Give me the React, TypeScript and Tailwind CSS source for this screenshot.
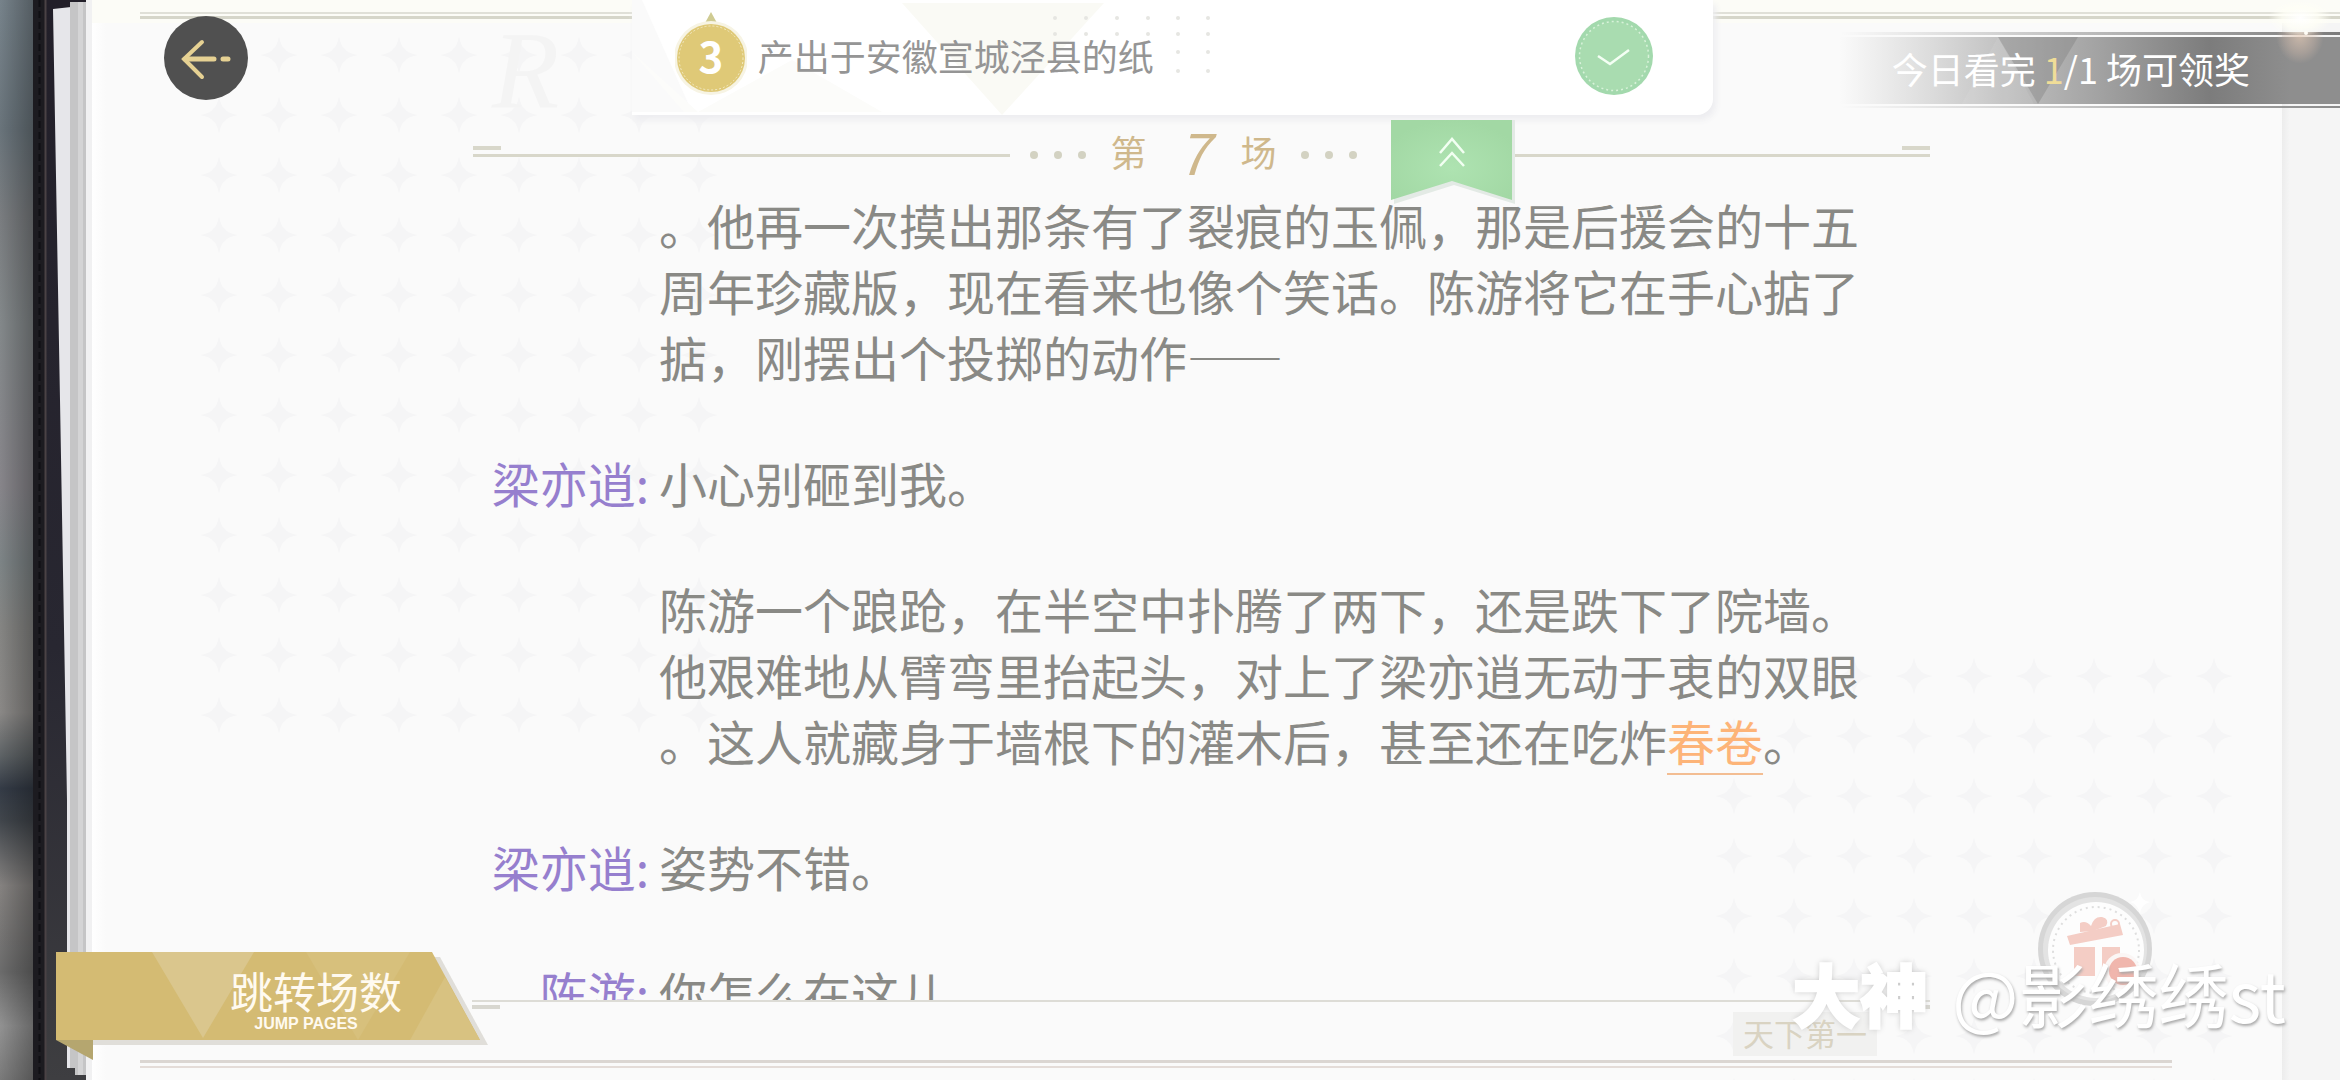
import type { ReactNode } from "react";

interface ScriptLine {
  speaker?: string;
  rows: ReactNode[];
}

const SCRIPT: ScriptLine[] = [
  {
    rows: [
      "。他再一次摸出那条有了裂痕的玉佩，那是后援会的十五",
      "周年珍藏版，现在看来也像个笑话。陈游将它在手心掂了",
      "掂，刚摆出个投掷的动作——",
    ],
  },
  { speaker: "梁亦逍", rows: ["小心别砸到我。"] },
  {
    rows: [
      "陈游一个踉跄，在半空中扑腾了两下，还是跌下了院墙。",
      "他艰难地从臂弯里抬起头，对上了梁亦逍无动于衷的双眼",
      <>
        。这人就藏身于墙根下的灌木后，甚至还在吃炸
        <a
          href="#clue"
          className="text-[#fdb478] underline decoration-[#f3bd92] decoration-2 underline-offset-[12px]"
        >
          春卷
        </a>
        。
      </>,
    ],
  },
  { speaker: "梁亦逍", rows: ["姿势不错。"] },
  { speaker: "陈游", rows: ["你怎么在这儿"] },
];

const CARD_DOTS = [
  [0, 0], [31, 0], [62, 0], [93, 0], [123, 0], [153, 0],
  [0, 16], [31, 16], [62, 16], [93, 16], [123, 16], [153, 16],
  [123, 34], [153, 34],
  [123, 53], [153, 53],
];

const BookEdge = () => (
  <div aria-hidden="true" className="relative w-[92px] shrink-0">
    <div className="absolute inset-y-0 left-0 w-[34px] bg-[linear-gradient(to_bottom,#77838b_0%,#69747b_12%,#7a7d80_20%,#83888a_30%,#87858a_45%,#7d8486_52%,#858583_58%,#8a8886_66%,#5d6265_70%,#343b46_73%,#41464c_76%,#858280_82%,#6b6b6b_90%,#929292_95%,#7a7a7a_100%)]" />
    <div className="absolute inset-y-0 left-0 w-[34px] bg-gradient-to-r from-transparent to-black/30" />
    <svg
      className="absolute inset-y-0 left-[33px] h-full w-[59px]"
      viewBox="0 0 59 1080"
      preserveAspectRatio="none"
    >
      <defs>
        <linearGradient id="cover" x1="0" y1="0" x2="0" y2="1">
          <stop offset="0" stopColor="#221f29" />
          <stop offset=".6" stopColor="#282731" />
          <stop offset="1" stopColor="#3e3e41" />
        </linearGradient>
      </defs>
      <rect width="59" height="1080" fill="url(#cover)" />
      <rect width="12" height="1080" fill="#1c1b20" />
      <path d="M6.500 0V1080" stroke="#0f0f13" strokeWidth="2" strokeDasharray="7 4" />
      <path d="M12.500 0V1080" stroke="#4a4245" strokeWidth="2" />
      <path d="M20 9L38 7V1068H34V800L27 400Z" fill="#e6e6ea" />
      <path d="M37 2H53V1075H42V1068H37Z" fill="#c5c5c6" />
      <path d="M45 2H50V1075H45Z" fill="#d4d4d5" />
      <path d="M53 0H59V1080H53Z" fill="#f1f1f2" />
    </svg>
  </div>
);

const PlusPattern = ({ id, className }: { id: string; className: string }) => (
  <svg aria-hidden="true" className={className}>
    <defs>
      <pattern id={id} width="60" height="60" patternUnits="userSpaceOnUse">
        <path
          d="M30 11Q32 22 36 24Q38 28 49 30Q38 32 36 36Q32 38 30 49Q28 38 24 36Q22 32 11 30Q22 28 24 24Q28 22 30 11Z"
          fill="#f5f5f6"
        />
      </pattern>
    </defs>
    <rect width="100%" height="100%" fill={`url(#${id})`} />
  </svg>
);

const Dots = () => (
  <span aria-hidden="true" className="flex gap-4">
    {[0, 1, 2].map((i) => (
      <i key={i} className="size-2 rounded-full bg-[#d3d2c2]" />
    ))}
  </span>
);

const SceneHeader = () => (
  <header className="flex h-[72px] items-center">
    <div className="relative h-[3px] flex-1 bg-[#d8d7ca]">
      <i className="absolute -top-2 left-0 h-1 w-7 bg-[#d8d7ca]" />
    </div>
    <div className="mr-4 flex items-center px-5">
      <Dots />
      <h1 className="mx-6 flex items-center pb-2 text-4xl text-[#cfb88c]">
        <span>第</span>
        <span className="w-[94px] text-center text-[56px] leading-none italic">7</span>
        <span>场</span>
      </h1>
      <Dots />
    </div>
    <div className="relative h-[3px] flex-1 bg-[#d8d7ca]">
      <i className="absolute -top-2 right-0 h-1 w-7 bg-[#d8d7ca]" />
    </div>
  </header>
);

const HintCard = () => (
  <section className="absolute top-0 left-[27%] flex h-[115px] w-[46.2%] items-center rounded-br-2xl bg-white pr-[60px] pl-[43px] shadow-[3px_5px_6px_#ededf0]">
    <svg aria-hidden="true" className="absolute top-0 left-0 h-[115px] w-[640px]" fill="none">
      <path d="M0 0H10L60 112H0Z" fill="#fafafa" />
      <path d="M0 52L52 112H250L160 60L66 112Z" fill="#fcfcfa" />
      <path d="M270 3H472L370 115Z" fill="#fafaf5" />
      <g fill="#e6e6e2">
        {CARD_DOTS.map(([x, y]) => (
          <circle key={`${x}-${y}`} cx={423 + x} cy={18 + y} r="2" />
        ))}
      </g>
    </svg>
    <svg viewBox="0 0 72 94" className="relative h-[94px] w-[72px]" role="img" aria-label="线索 3">
      <path d="M36 1L42 12H30Z" fill="#cfcb92" />
      <circle cx="36" cy="47" r="37" fill="#f7f4e4" />
      <circle cx="36" cy="47" r="34" fill="#dfc977" />
      <circle cx="36" cy="47" r="32" stroke="#f3eac4" strokeWidth="1" strokeDasharray="2 2" fill="none" />
      <text x="36" y="62" textAnchor="middle" fill="#fff" className="text-[42px] font-bold">
        3
      </text>
    </svg>
    <p className="relative ml-[11px] flex-1 pb-1.5 text-4xl text-[#959595]">产出于安徽宣城泾县的纸</p>
    <svg viewBox="0 0 78 78" className="relative mb-1 size-[78px]" role="img" aria-label="已完成">
      <circle cx="39" cy="39" r="39" fill="#a3d9ad" />
      <circle cx="39" cy="39" r="34.500" fill="#a9dcb0" stroke="#d8f2d9" strokeWidth="1.500" strokeDasharray="2 3" />
      <path d="M23 39L35 47L54 33" fill="none" stroke="#f4fff4" strokeWidth="2.500" />
    </svg>
    <button type="button" aria-label="收起" className="absolute top-[120px] right-[198px]">
      <svg viewBox="0 0 124 84" className="h-[84px] w-[124px]">
        <defs>
          <radialGradient id="flag" cx=".5" cy=".6" r=".6">
            <stop offset="0" stopColor="#aee3b1" />
            <stop offset="1" stopColor="#a2d8a4" />
          </radialGradient>
        </defs>
        <path d="M3 0H124V84L63 65L3 84Z" fill="#e3eae5" />
        <path d="M0 0H121V80L61 61L0 80Z" fill="url(#flag)" />
        <path d="M49 33L61 19L73 33M49 46L61 33L73 46" fill="none" stroke="#f2fff2" strokeWidth="2.500" />
      </svg>
    </button>
  </section>
);

const RewardBanner = () => (
  <div className="absolute top-8 right-0 w-[500px]">
    <div className="h-[3px] bg-gradient-to-r from-transparent to-[#7c7c7c]" />
    <div className="relative my-0.5 flex h-[67px] items-center justify-end bg-[linear-gradient(to_right,transparent,#dcdcdc_18%,#c2c2c2_32%,#a2a2a2_52%,#7c7c7c_74%,#8e8e8e_90%)] pr-[90px] pb-1.5">
      <svg aria-hidden="true" className="absolute inset-y-0 left-[122px] h-full w-[120px]" viewBox="0 0 120 67">
        <path d="M36 0L0 67H72Z" fill="#fff" opacity=".08" />
        <path d="M36 0H116L76 67Z" fill="#777" opacity=".35" />
      </svg>
      <p className="relative text-4xl whitespace-pre text-white">
        今日看完 <span className="text-[#f0dd98]">1</span>/1 场可领奖
      </p>
    </div>
    <div className="h-0.5 bg-gradient-to-r from-transparent to-[#8a8a8a]" />
    <i className="absolute top-0 right-4 h-8 w-12 bg-[radial-gradient(ellipse_at_50%_10%,#e8cdb8aa_0%,#d8bfae55_45%,transparent_70%)]" />
    <i className="absolute -top-8 right-2 h-9 w-16 bg-[radial-gradient(ellipse_at_50%_50%,#ffffff_0%,#fffff6cc_40%,transparent_70%)]" />
    <i className="absolute -top-px right-8 size-1 rounded-full bg-[#fffdf6]" />
  </div>
);

const JumpButton = () => (
  <button
    type="button"
    className="absolute bottom-5 left-14 flex h-[108px] w-[432px] flex-col items-center pt-4 pr-[70px] pb-5 pl-[158px] text-[#fffaf0]"
  >
    <svg aria-hidden="true" className="absolute inset-0 h-full w-full" viewBox="0 0 432 108">
      <path d="M37 5H384L432 93H37Z" fill="#e0ded9" />
      <path d="M0 88H37V108Z" fill="#b5a66f" />
      <path d="M0 0H376L424 88H0Z" fill="#d4bb73" />
      <path d="M96 0H198L147 86Z" fill="#dac68d" />
      <path d="M250 0H354L302 88Z" fill="#d7c07c" />
      <path d="M389 25L424 88H354Z" fill="#d8c281" />
    </svg>
    <span className="relative text-[43px] leading-[44px] whitespace-nowrap">跳转场数</span>
    <span className="relative pr-5 font-['Liberation_Sans',sans-serif] text-base leading-6 font-bold">
      JUMP PAGES
    </span>
  </button>
);

const GiftButton = () => (
  <button type="button" aria-label="礼物" className="absolute right-[186px] bottom-[72px]">
    <svg viewBox="0 0 118 118" className="size-[118px]" fill="none">
      <circle cx="59" cy="59" r="57" fill="#d6d6d6" />
      <circle cx="59" cy="59" r="52" fill="#e3e3e3" />
      <circle cx="60" cy="60" r="48" fill="#fdfdfd" />
      <circle cx="60" cy="60" r="43" stroke="#dedede" strokeWidth="2" strokeDasharray="2 4" />
      <g fill="#f4cdc5">
        <path d="M31 46L84 34L87 45L34 55Z" />
        <path d="M44 42L44 33Q50 30 55 36Q58 26 66 27Q74 29 70 36L57 41Z" />
        <path d="M38 57H59V86H38Z" />
        <path d="M66 57H84V86H66Z" />
      </g>
      <circle cx="79" cy="34" r="4" stroke="#f4cdc5" strokeWidth="2" />
      <circle cx="86" cy="81" r="18" fill="#fbf6f5" />
      <circle cx="87" cy="81" r="14" fill="#f0b6ad" />
      <path d="M104 2Q105 11 114 12Q105 14 104 24Q102 14 94 12Q102 11 104 2Z" fill="#fff" />
    </svg>
  </button>
);

const Watermark = () => (
  <p className="pointer-events-none absolute right-[54px] bottom-[52px] flex items-center gap-6 leading-none text-white">
    <span className="text-[68px] font-black [-webkit-text-stroke:2px_white] [text-shadow:0_0_6px_#bdbdbd]">
      大神
    </span>
    <span className="text-[70px] [text-shadow:1px_2px_3px_#a8a8a8]">@影绣绣st</span>
  </p>
);

export default function App() {
  return (
    <div
      lang="zh-CN"
      className="relative flex h-screen overflow-hidden bg-[#fafafa] font-['Noto_Sans_CJK_SC',sans-serif]"
    >
      <BookEdge />

      <main className="relative flex min-w-0 flex-1 flex-col bg-[linear-gradient(to_right,#ffffff,#fafafa_14px)]">
        <i className="absolute inset-y-0 right-0 w-[58px] bg-[linear-gradient(to_right,#ececec,#f5f5f5_8px)]" />
        <PlusPattern id="plus-tl" className="absolute top-[25px] left-[97px] h-[720px] w-[540px]" />
        <PlusPattern id="plus-br" className="absolute right-[96px] bottom-0 h-[434px] w-[540px]" />
        <span
          aria-hidden="true"
          className="absolute top-4 left-[400px] font-['Liberation_Serif',serif] text-[110px] leading-none text-[#f4f4f4] italic"
        >
          R
        </span>

        <div className="relative h-[119px]">
          <div className="bg-[#fcfcf7] pt-3 pb-1 pl-12">
            <div className="h-[7px] border-t-2 border-b-3 border-t-[#e0e0d8] border-b-[#d6d6ca]" />
          </div>
        </div>

        <div className="relative flex min-h-0 flex-1 flex-col pr-[410px] pl-[381px]">
          <SceneHeader />
          <div className="-mt-2 min-h-0 flex-1 space-y-[60px] overflow-hidden pt-2">
            {SCRIPT.map((line, i) => (
              <div key={i} className="flex gap-2.5 text-5xl leading-[66px]">
                <div className="w-44 shrink-0 text-right text-[#967fce]">
                  {line.speaker && `${line.speaker}:`}
                </div>
                <p className="text-[#898985]">
                  {line.rows.map((row, r) => (
                    <span key={r} className="block whitespace-nowrap">
                      {row}
                    </span>
                  ))}
                </p>
              </div>
            ))}
          </div>
        </div>

        <footer className="relative flex h-20 flex-col">
          <div className="mr-[410px] ml-[380px] flex justify-between border-t-2 border-[#dddcd6] pt-[3px]">
            <i className="h-1 w-7 bg-[#d8d7d0]" />
            <i className="h-1 w-7 bg-[#d8d7d0]" />
          </div>
          <div className="mr-[463px] flex flex-1 justify-end pt-[3px]">
            <span className="h-11 bg-[#f1f1f0] px-2.5 text-[31px] leading-[42px] text-[#d9d3c2]">
              天下第一
            </span>
          </div>
          <div className="mr-[168px] mb-3 ml-12 h-2 shrink-0 border-t-3 border-b-2 border-t-[#dbd6d2] border-b-[#e4dcd8]" />
        </footer>
      </main>

      <HintCard />
      <RewardBanner />
      <button
        type="button"
        aria-label="返回"
        className="absolute top-4 left-[164px] size-[84px] rounded-full bg-[#505050]"
      >
        <svg viewBox="0 0 84 84" className="size-full" fill="none" stroke="#e6d193" strokeLinecap="round">
          <path d="M38 26L20 43L38 61" strokeWidth="4" />
          <path d="M21 43H50M59 43H64" strokeWidth="5" />
        </svg>
      </button>
      <JumpButton />
      <GiftButton />
      <Watermark />
    </div>
  );
}
